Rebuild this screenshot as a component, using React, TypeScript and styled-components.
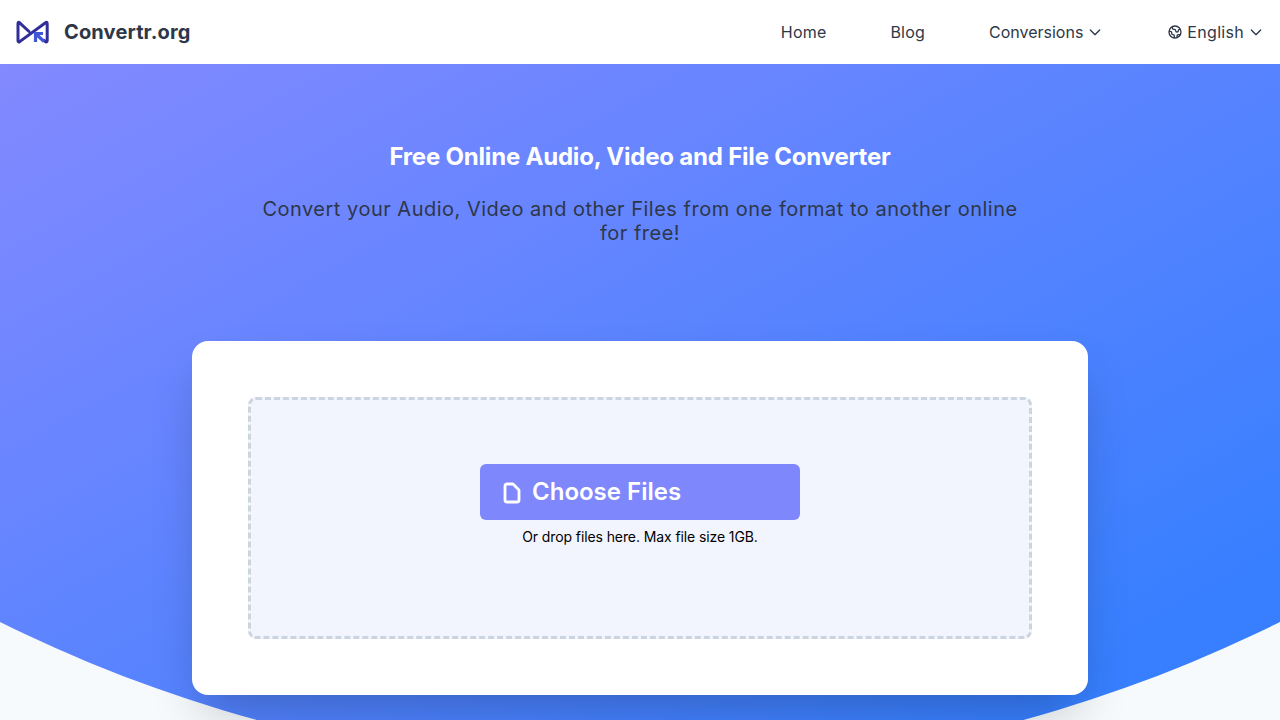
import styled, { createGlobalStyle } from "styled-components";
import { HiOutlineChevronDown, HiOutlineDocument, HiOutlineGlobe } from "react-icons/hi";

const GlobalStyle = createGlobalStyle`
	html, body {
		margin: 0;
		padding: 0;
		background: #f7fafc;
		font-family: "Inter", "Liberation Sans", sans-serif;
	}
`;

const App = () => {
	return (
		<Page>
			<GlobalStyle />
			<Header>
				<Brand>
					<svg width="34" height="26" viewBox="0 0 34 26" fill="none">
						<path
							d="M13 12.5 L3.7 3.8 Q2 2.6 2 4.7 V21.5 Q2 23.6 3.7 22.6 L29.5 3.8 Q31.2 2.6 31.2 4.7 V21.5 Q31.2 23.6 29.5 22.6 L28 21.4"
							stroke="#312e9a"
							strokeWidth="3"
							strokeLinejoin="round"
							strokeLinecap="round"
						/>
						<path d="M19.5 23 V14.5 H27 M19.5 14.5 L28 22.5" stroke="#3f56d6" strokeWidth="3.2" />
					</svg>
					<BrandName>Convertr.org</BrandName>
				</Brand>
				<Nav>
					<NavItem $spacing={0.2}>Home</NavItem>
					<NavItem $spacing={0.2}>Blog</NavItem>
					<NavItem $spacing={0}>
						Conversions
						<HiOutlineChevronDown size={16} />
					</NavItem>
					<NavItem $spacing={0.3}>
						<HiOutlineGlobe size={16} />
						English
						<HiOutlineChevronDown size={16} />
					</NavItem>
				</Nav>
			</Header>
			<Hero>
				<Title>Free Online Audio, Video and File Converter</Title>
				<Subtitle>Convert your Audio, Video and other Files from one format to another online for free!</Subtitle>
				<Card>
					<DropZone>
						<ChooseButton>
							<DocIcon size={24} />
							Choose Files
						</ChooseButton>
						<DropHint>Or drop files here. Max file size 1GB.</DropHint>
					</DropZone>
				</Card>
			</Hero>
		</Page>
	);
};

const Page = styled.div`
	height: 100vh;
	overflow: hidden;
	display: flex;
	flex-direction: column;
`;

const Header = styled.header`
	height: 64px;
	flex: none;
	display: flex;
	align-items: center;
	justify-content: space-between;
	padding: 0 16px;
	background: #fff;
`;

const Brand = styled.div`
	display: flex;
	align-items: center;
	gap: 14px;
`;

const BrandName = styled.span`
	font-size: 20px;
	font-weight: 700;
	letter-spacing: 0.15px;
	color: #2d3748;
`;

const Nav = styled.nav`
	display: flex;
	align-items: center;
	gap: 64px;
`;

const NavItem = styled.a<{ $spacing: number }>`
	display: flex;
	align-items: center;
	gap: 4px;
	font-size: 16px;
	letter-spacing: ${(props) => props.$spacing}px;
	color: #2d3748;
`;

const Hero = styled.main`
	position: relative;
	flex: none;
	height: 722px;
	display: flex;
	flex-direction: column;
	align-items: center;
	padding-top: 81px;
	box-sizing: border-box;

	&::before {
		content: "";
		position: absolute;
		inset: 0;
		background: linear-gradient(to bottom right, #8389ff, #377fff 85%);
		clip-path: circle(1440px at 640px -732px);
	}
`;

const Title = styled.h1`
	position: relative;
	margin: 0;
	font-size: 24px;
	line-height: 24px;
	font-weight: 700;
	letter-spacing: -0.2px;
	color: #fff;
`;

const Subtitle = styled.p`
	position: relative;
	width: 768px;
	margin: 28px 0 0;
	font-size: 20px;
	line-height: 24px;
	letter-spacing: 0.5px;
	text-align: center;
	color: #2d3748;
`;

const Card = styled.section`
	position: relative;
	width: 896px;
	height: 354px;
	margin-top: 96px;
	padding: 56px;
	box-sizing: border-box;
	background: #fff;
	border-radius: 16px;
	box-shadow: 0 25px 50px -12px rgba(0, 0, 0, 0.25);
`;

const DropZone = styled.div`
	height: 242px;
	padding-top: 64px;
	box-sizing: border-box;
	display: flex;
	flex-direction: column;
	align-items: center;
	background: #f2f5fd;
	border: 3px dashed #cbd5e0;
	border-radius: 8px;
`;

const ChooseButton = styled.button`
	width: 320px;
	height: 56px;
	display: flex;
	align-items: center;
	gap: 8px;
	padding: 0 20px 2px;
	border: none;
	border-radius: 6px;
	background: #7f87fd;
	color: #fff;
	font-family: inherit;
	font-size: 24px;
	font-weight: 600;
`;

const DocIcon = styled(HiOutlineDocument)`
	margin-top: 3px;

	path {
		stroke-width: 2.8;
	}
`;

const DropHint = styled.p`
	margin: 7px 0 0;
	font-size: 14px;
	line-height: 20px;
	letter-spacing: -0.1px;
	color: #000;
`;

export default App;
